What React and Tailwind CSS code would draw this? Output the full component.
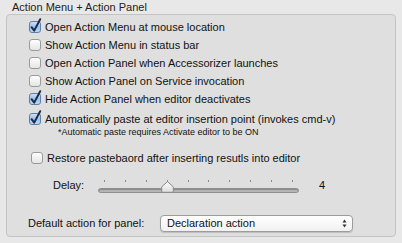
import React from "react";

function Checkbox({ checked }) {
  return (
    <svg width="12" height="12" viewBox="0 0 12 12" className="shrink-0 overflow-visible">
      <defs>
        <linearGradient id="cbOff" x1="0" y1="0" x2="0" y2="1">
          <stop offset="0" stopColor="#ffffff" />
          <stop offset="1" stopColor="#e4e4e4" />
        </linearGradient>
        <linearGradient id="cbOn" x1="0" y1="0" x2="0" y2="1">
          <stop offset="0" stopColor="#d2e4f8" />
          <stop offset="0.5" stopColor="#9dc0ec" />
          <stop offset="1" stopColor="#c0daf6" />
        </linearGradient>
      </defs>
      <rect
        x="0.5"
        y="0.5"
        width="11"
        height="11"
        rx="2.5"
        fill={checked ? "url(#cbOn)" : "url(#cbOff)"}
        stroke={checked ? "#5f7fa8" : "#9a9a9a"}
      />
      {checked && (
        <path
          d="M2.6 6.2 L5.2 9.6 L11.2 -1.8"
          fill="none"
          stroke="#1d2c48"
          strokeWidth="2"
          strokeLinecap="round"
          strokeLinejoin="round"
        />
      )}
    </svg>
  );
}

function CheckRow({ checked, label, className = "" }) {
  return (
    <div className={`flex items-center h-[18px] ${className}`}>
      <Checkbox checked={checked} />
      <span className="ml-[4px] whitespace-nowrap">{label}</span>
    </div>
  );
}

function Slider() {
  const ticks = Array.from({ length: 10 });
  return (
    <div className="relative w-[201px] h-[15px] shrink-0">
      <div className="flex justify-between px-[6px] pt-[2px]">
        {ticks.map((_, i) => (
          <div key={i} className="w-[1px] h-[2px] bg-[#8c8c8c]" />
        ))}
      </div>
      <div className="mt-[6px] h-[5px] rounded-full bg-[#b6b6b6] border border-[#8e8e8e] shadow-[inset_0_1px_1px_rgba(0,0,0,0.25)]" />
      <svg width="13" height="12" viewBox="0 0 13 12" className="absolute left-[63px] top-[3px]">
        <defs>
          <linearGradient id="thumb" x1="0" y1="0" x2="0" y2="1">
            <stop offset="0" stopColor="#ffffff" />
            <stop offset="1" stopColor="#dcdcdc" />
          </linearGradient>
        </defs>
        <path
          d="M6.5 0.7 L12.3 5.8 L12.3 10.2 Q12.3 11.3 11.2 11.3 L1.8 11.3 Q0.7 11.3 0.7 10.2 L0.7 5.8 Z"
          fill="url(#thumb)"
          stroke="#8a8a8a"
          strokeWidth="1"
        />
      </svg>
    </div>
  );
}

function Popup({ value }) {
  return (
    <div className="flex items-center w-[193px] h-[17px] rounded-[4px] border border-[#9c9c9c] bg-gradient-to-b from-white to-[#f1f1f1] shadow-[0_1px_1px_rgba(0,0,0,0.15)] pl-[6px] pr-[5px]">
      <span className="flex-1 whitespace-nowrap">{value}</span>
      <svg width="5" height="9" viewBox="0 0 5 9">
        <path d="M2.5 0.5 L4.5 3.5 L0.5 3.5 Z" fill="#333" />
        <path d="M2.5 8.5 L4.5 5.5 L0.5 5.5 Z" fill="#333" />
      </svg>
    </div>
  );
}

export default function App() {
  return (
    <div
      className="w-[402px] h-[243px] bg-[#e8e8e8] text-[11px] text-[#111] overflow-hidden"
      style={{ fontFamily: '"Liberation Sans", Arial, sans-serif' }}
    >
      <div className="h-[14px] leading-[14px] pl-[12px] text-[#222]">Action Menu + Action Panel</div>
      <div className="mx-[6px] h-[223px] rounded-[4px] border border-[#c4c4c4] bg-[#dfdfdf] pl-[22px] pt-[3px]">
        <CheckRow checked label="Open Action Menu at mouse location" />
        <CheckRow label="Show Action Menu in status bar" />
        <CheckRow label="Open Action Panel when Accessorizer launches" />
        <CheckRow label="Show Action Panel on Service invocation" />
        <CheckRow checked label="Hide Action Panel when editor deactivates" />
        <CheckRow checked label="Automatically paste at editor insertion point (invokes cmd-v)" className="mt-[2px]" />
        <div className="h-[10px] leading-[10px] pl-[29px] text-[9px] whitespace-nowrap mt-[-1px]">
          *Automatic paste requires Activate editor to be ON
        </div>
        <CheckRow label="Restore pastebaord after inserting resutls into editor" className="mt-[12px] pl-[2px]" />
        <div className="flex items-center mt-[10px] pl-[24px]">
          <span className="w-[45px]">Delay:</span>
          <Slider />
          <span className="ml-[20px]">4</span>
        </div>
        <div className="flex items-center mt-[21px] -ml-[1px]">
          <span className="w-[132px] whitespace-nowrap">Default action for panel:</span>
          <Popup value="Declaration action" />
        </div>
      </div>
    </div>
  );
}
